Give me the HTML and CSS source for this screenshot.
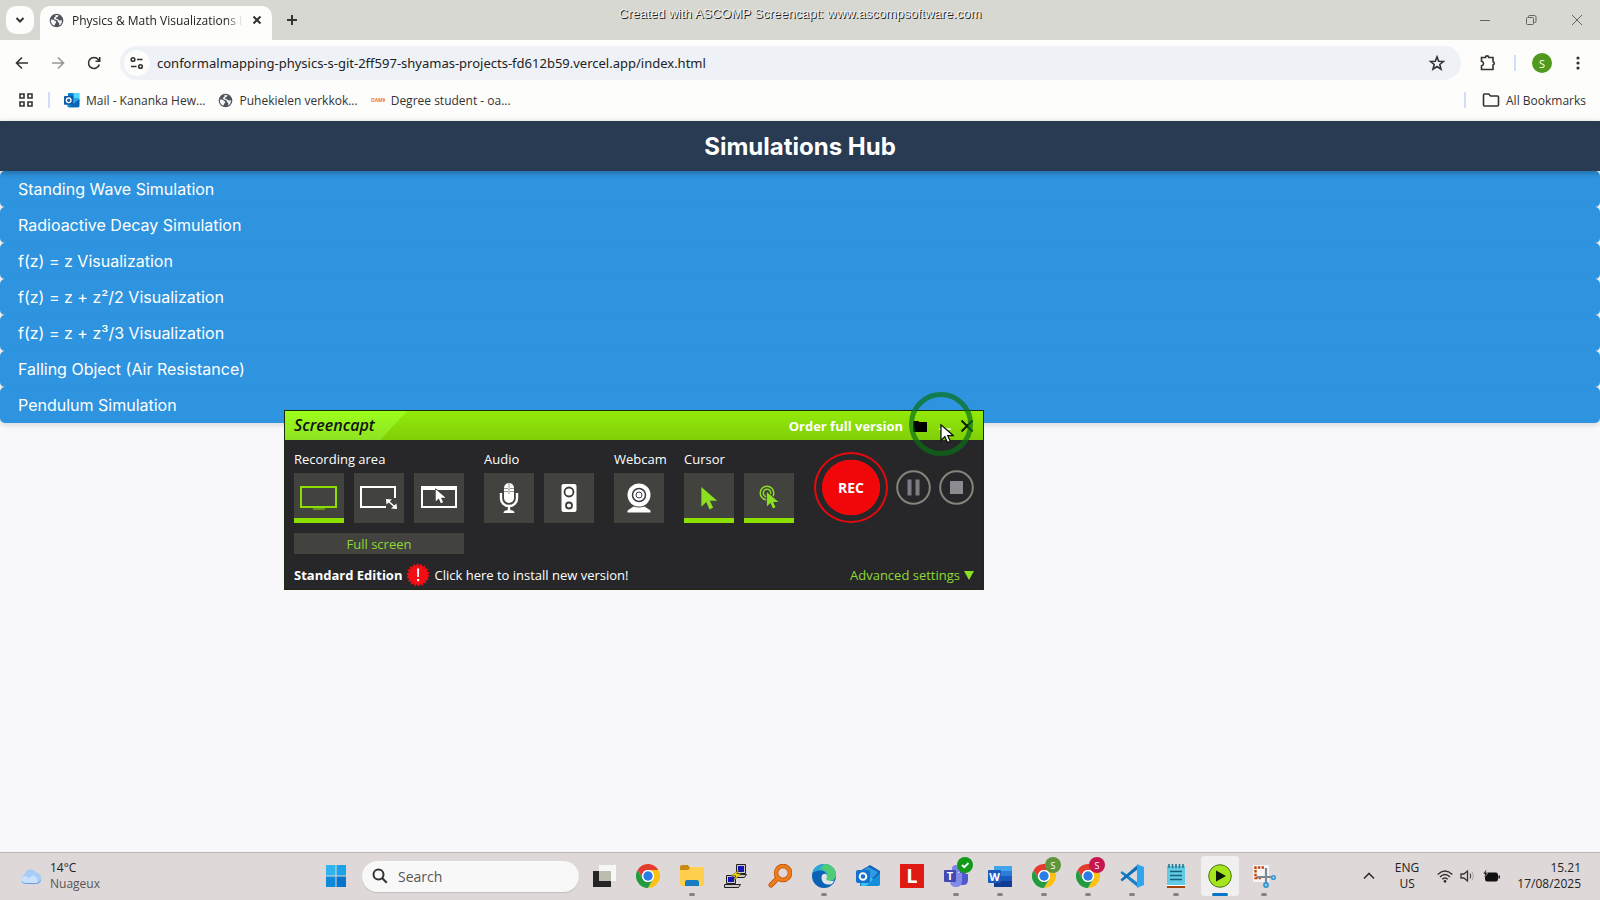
FILE: index.html
```html
<!DOCTYPE html>
<html lang="en">
<head>
<meta charset="utf-8">
<title>Physics &amp; Math Visualizations Hub</title>
<link rel="stylesheet" href="styles.css">
</head>
<body>
<svg class="defs" aria-hidden="true">
  <defs>
    <symbol id="globe" viewBox="0 0 16 16"><circle cx="8" cy="8" r="7.300" fill="#50555b"/><path d="M2 7.200C4 6.500 5.200 7.500 6.500 8.200 8 9 8 10.400 6.800 11.200 6 12 6.300 13 5.500 13.600 3 12.500 1.600 10 2 7.200ZM7 2l3.200.3L9.400 4 7.600 4.800 7.800 6.400 9.600 6.600 11 8 13.800 7.600C14 10 12.800 12.300 10.800 13.300L11 11 9.400 9.200 9 7.800 6.200 7 5 5.200 6.800 4Z" fill="#f4f5f6"/></symbol>
    <symbol id="outlook" viewBox="0 0 24 24"><path d="M6 2h17v14H6z" fill="#28a8ea"/><path d="M6 2h8.500v7H6z" fill="#0078d4"/><path d="M14.500 2H23v7h-8.500z" fill="#50d9ff"/><path d="M5 11 14 17 23 11v10a2 2 0 0 1-2 2H7a2 2 0 0 1-2-2z" fill="#1490df"/><path d="m23 11-16 12h14a2 2 0 0 0 2-2z" fill="#0a64b8"/><rect x="0" y="6" width="14" height="13" rx="1" fill="#0f5ba7"/><circle cx="7" cy="12.500" r="3.500" fill="none" stroke="#fff" stroke-width="2"/></symbol>
    <symbol id="chrome" viewBox="0 0 24 24"><circle cx="12" cy="12" r="12" fill="#fff"/><path d="M1.600 6A12 12 0 0 1 22.400 6H12a6 6 0 0 0-5.200 9Z" fill="#e33b2e"/><path d="M22.400 6A12 12 0 0 1 12 24l5.200-9A6 6 0 0 0 12 6Z" fill="#fbc116"/><path d="M12 24A12 12 0 0 1 1.600 6l5.200 9A6 6 0 0 0 17.200 15Z" fill="#249a41"/><circle cx="12" cy="12" r="6" fill="#fff"/><circle cx="12" cy="12" r="4.700" fill="#2a7de9"/></symbol>
    <symbol id="pointer" viewBox="0 0 16 22"><path d="M1 1v18l4.500-4.300L8.500 21.500l3.300-1.500-3-6.500H15.500Z"/></symbol>
  </defs>
</svg>

<div class="desktop">
  <header class="browser">
    <div class="tabstrip">
      <button class="tab-search" aria-label="Search tabs"><svg width="12" height="12" viewBox="0 0 12 12" class="line thick"><path d="m2.500 4 3.500 3.500L9.500 4"/></svg></button>
      <div class="tab">
        <svg width="15" height="15"><use href="#globe"/></svg>
        <span class="tab-title">Physics &amp; Math Visualizations Hub</span>
        <button aria-label="Close tab"><svg width="12" height="12" viewBox="0 0 12 12" class="line thick"><path d="m2.500 2.500 7 7m0-7-7 7"/></svg></button>
      </div>
      <button class="new-tab" aria-label="New tab"><svg width="12" height="12" viewBox="0 0 12 12" class="line thick"><path d="M6 1v10M1 6h10"/></svg></button>
      <div class="window-buttons">
        <button aria-label="Minimize"><svg width="12" height="12" viewBox="0 0 12 12" class="line"><path d="M1 6.500h10"/></svg></button>
        <button aria-label="Restore"><svg width="12" height="12" viewBox="0 0 12 12" class="line"><rect x="1.500" y="3.500" width="7" height="7" rx="1"/><path d="M3.500 3V2.500q0-1 1-1h5q1.500 0 1.500 1.500v4.500q0 1-1 1h-.8"/></svg></button>
        <button aria-label="Close"><svg width="12" height="12" viewBox="0 0 12 12" class="line"><path d="m1 1 10 10m0-10L1 11"/></svg></button>
      </div>
    </div>
    <div class="toolbar">
      <button aria-label="Back"><svg width="16" height="16" viewBox="0 0 16 16" class="line mid"><path d="M14 8H3m5-5.500L2.500 8 8 13.500"/></svg></button>
      <button aria-label="Forward" class="faded"><svg width="16" height="16" viewBox="0 0 16 16" class="line mid"><path d="M2 8h11M8 2.500 13.500 8 8 13.500"/></svg></button>
      <button aria-label="Reload"><svg width="16" height="16" viewBox="0 0 16 16" class="line mid"><path d="M13.300 9.500A5.500 5.500 0 1 1 12.300 4.500L13.500 6M13.700 2v4.200H9.500"/></svg></button>
      <div class="address">
        <button class="site-info" aria-label="Site information"><svg width="16" height="16" viewBox="0 0 16 16" class="line mid"><circle cx="4" cy="4.500" r="1.800"/><path d="M8 4.500h5.500M2 11.500h5.500"/><circle cx="11.500" cy="11.500" r="1.800"/></svg></button>
        <input type="text" aria-label="Address" value="conformalmapping-physics-s-git-2ff597-shyamas-projects-fd612b59.vercel.app/index.html">
        <button aria-label="Bookmark this page"><svg width="16" height="16" viewBox="0 0 16 16" class="line mid"><path d="m8 1.800 1.700 4.400 4.700.3-3.600 3 1.200 4.600L8 11.500l-4 2.600 1.200-4.600-3.600-3 4.700-.3Z"/></svg></button>
      </div>
      <button aria-label="Extensions"><svg width="18" height="18" viewBox="0 0 18 18" class="line mid"><path d="M2.500 3.500H6.500a1.600 1.600 0 0 1 3.200 0H14v4.200a1.700 1.700 0 0 1 0 3.300v4.500H2.500v-3.700q2-.5 2-2.300t-2-2.300Z"/></svg></button>
      <i class="divider"></i>
      <button class="avatar" aria-label="Profile">S</button>
      <button aria-label="Menu"><svg width="16" height="16" viewBox="0 0 16 16" fill="#333"><circle cx="8" cy="3" r="1.600"/><circle cx="8" cy="8" r="1.600"/><circle cx="8" cy="13" r="1.600"/></svg></button>
    </div>
    <nav class="bookmarks">
      <button aria-label="Apps"><svg width="16" height="16" viewBox="0 0 16 16" class="line mid"><path d="M2 2h4v4H2zM10 2h4v4h-4zM2 10h4v4H2zM10 10h4v4h-4z"/></svg></button>
      <i class="divider"></i>
      <a href="#mail"><svg width="16" height="16"><use href="#outlook"/></svg>Mail - Kananka Hew...</a>
      <a href="#puhekielen"><svg width="15" height="15"><use href="#globe"/></svg>Puhekielen verkkok...</a>
      <a href="#degree"><b class="oamk">OAMK</b>Degree student - oa...</a>
      <i class="divider push"></i>
      <a href="#all"><svg width="18" height="16" viewBox="0 0 18 16" class="line mid"><path d="M1.500 13V3q0-1 1-1h4.300l1.700 2h7q1 0 1 1v8q0 1-1 1h-13q-1 0-1-1Z"/></svg>All Bookmarks</a>
    </nav>
    <div class="watermark">Created with ASCOMP Screencapt: www.ascompsoftware.com</div>
  </header>

  <main class="page">
    <h1>Simulations Hub</h1>
    <nav class="links">
      <a href="#wave">Standing Wave Simulation</a>
      <a href="#decay">Radioactive Decay Simulation</a>
      <a href="#z">f(z) = z Visualization</a>
      <a href="#z2">f(z) = z + z²/2 Visualization</a>
      <a href="#z3">f(z) = z + z³/3 Visualization</a>
      <a href="#fall">Falling Object (Air Resistance)</a>
      <a href="#pendulum">Pendulum Simulation</a>
    </nav>
  </main>

  <section class="recorder" aria-label="Screencapt">
    <div class="rec-title">
      <span class="brand">Screencapt</span>
      <a href="#order">Order full version</a>
      <button aria-label="Open folder"><svg width="14" height="12" viewBox="0 0 14 12"><path d="M0 1h5l1.500 1H14v10H0z"/></svg></button>
      <button aria-label="Minimize"><svg width="12" height="12" viewBox="0 0 12 12"><path d="M0 8h12v2H0z" fill="#d9f7a0"/></svg></button>
      <button aria-label="Close"><svg width="14" height="14" viewBox="0 0 14 14"><path d="m1.500 1.500 11 11m0-11-11 11" stroke="#0b1a00" stroke-width="2"/></svg></button>
    </div>
    <div class="rec-body">
      <div class="group">
        <h2>Recording area</h2>
        <div class="tiles">
          <button class="tile on" aria-label="Full screen"><svg width="38" height="26" viewBox="0 0 38 26" fill="none" stroke="#8be000" stroke-width="2"><rect x="1" y="2" width="35" height="20"/><path d="M13 24h12" stroke-width="1"/></svg></button>
          <button class="tile" aria-label="Region"><svg width="38" height="26" viewBox="0 0 38 26" fill="none" stroke="#fff" stroke-width="2"><path d="M26 22H1V2h34v11"/><path d="m27 15 9 8" stroke-width="1.500"/><path d="m26 14 6 .5-5.500 5ZM37 24l-6-.5 5.500-5Z" fill="#fff" stroke="none"/></svg></button>
          <button class="tile" aria-label="Window"><svg width="38" height="26" viewBox="0 0 38 26"><path d="M1 1h36v22H1zM3 5v16h32V5z" fill="#fff" fill-rule="evenodd"/><svg x="15" y="3" width="11" height="16" viewBox="0 0 16 22" fill="#fff" stroke="#37373a" stroke-width="2" paint-order="stroke"><use href="#pointer"/></svg></svg></button>
        </div>
        <button class="mode">Full screen</button>
      </div>
      <div class="group">
        <h2>Audio</h2>
        <div class="tiles">
          <button class="tile" aria-label="Microphone"><svg width="20" height="32" viewBox="0 0 20 32"><rect x="5" y="1" width="10" height="20" rx="5" fill="#fff"/><path d="M5 6.500h4m2 0h4M5 9.500h4m2 0h4M10 1v11" stroke="#99998f"/><path d="M2 11v5.500a8 7.500 0 0 0 16 0V11M10 24v5" fill="none" stroke="#fff" stroke-width="2.400"/><path d="M4.500 31q0-3 5.500-3t5.500 3Z" fill="#fff"/></svg></button>
          <button class="tile" aria-label="Speaker"><svg width="16" height="30" viewBox="0 0 16 30"><rect x=".5" y="1" width="15" height="28" rx="2" fill="#fff"/><g fill="none" stroke="#3b3b37" stroke-width="1.800"><circle cx="8" cy="9" r="4.500"/><circle cx="8" cy="22.500" r="3"/></g></svg></button>
        </div>
      </div>
      <div class="group narrow">
        <h2>Webcam</h2>
        <div class="tiles">
          <button class="tile" aria-label="Webcam"><svg width="26" height="32" viewBox="0 0 26 32"><circle cx="13" cy="13" r="11.500" fill="#fff"/><circle cx="13" cy="13" r="6.500" fill="none" stroke="#3b3b45" stroke-width="1.500"/><circle cx="13" cy="13" r="3" fill="none" stroke="#3b3b45"/><path d="M1.500 30.500v-2l6-4q5.500 2 11 0l6 4v2Z" fill="#fff"/></svg></button>
        </div>
      </div>
      <div class="group">
        <h2>Cursor</h2>
        <div class="tiles">
          <button class="tile on" aria-label="Show cursor"><svg width="18" height="24" fill="#8be022"><use href="#pointer"/></svg></button>
          <button class="tile on" aria-label="Show clicks"><svg width="20" height="26" viewBox="0 0 20 26"><g fill="none" stroke="#8be022" stroke-width="1.500"><circle cx="8" cy="8" r="6.800"/><circle cx="8" cy="8" r="3.700"/></g><svg x="7" y="6" width="13" height="18" viewBox="0 0 16 22" fill="#8be022" stroke="#39393f" stroke-width="2" paint-order="stroke"><use href="#pointer"/></svg></svg></button>
        </div>
      </div>
      <div class="controls">
        <button class="rec">REC</button>
        <button aria-label="Pause"><svg width="35" height="35" viewBox="0 0 35 35"><circle cx="17.500" cy="17.500" r="16.300" fill="none" stroke="#85857b" stroke-width="2"/><path d="M11.500 9.500h4v16h-4zM19.500 9.500h4v16h-4z" fill="#7c7c86"/></svg></button>
        <button aria-label="Stop"><svg width="35" height="35" viewBox="0 0 35 35"><circle cx="17.500" cy="17.500" r="16.300" fill="none" stroke="#85857b" stroke-width="2"/><path d="M11 11h13v13H11z" fill="#8b8b92"/></svg></button>
      </div>
    </div>
    <div class="rec-foot">
      <b>Standard Edition</b>
      <svg width="24" height="24" viewBox="0 0 24 24"><circle cx="12" cy="12" r="10" fill="#f30d14"/><circle cx="12" cy="12" r="10" fill="none" stroke="#f30d14" stroke-width="2.500" stroke-dasharray="1.800 1.700"/><path d="M11 5.500h2.200l-.3 8.500h-1.600zM11 16h2.200v2.300H11z" fill="#fff"/></svg>
      <a href="#install">Click here to install new version!</a>
      <button class="advanced">Advanced settings <svg width="10" height="9" viewBox="0 0 10 9"><path d="M0 0h10L5 9Z" fill="#8be022"/></svg></button>
    </div>
    <div class="click-ring"><svg width="14" height="19" fill="#fff" stroke="#111" stroke-width="1.500"><use href="#pointer"/></svg></div>
  </section>

  <footer class="taskbar">
    <button class="weather">
      <svg width="22" height="18" viewBox="0 0 22 18"><path d="M5 17a5 5 0 0 1-.5-9.700A6.200 6.200 0 0 1 16 5.500a5.800 5.800 0 0 1 .5 11.500Z" fill="#a9ccf6"/><path d="M5 17a4 4 0 0 1 0-8q3 0 4 2.500Q12 7 16 10q3 3 .5 7Z" fill="#c8e1fb"/><path d="M1.500 14q1.500 2.500 4 2.500h11q3 0 4-3" fill="none" stroke="#6e9be6"/></svg>
      <span>14°C<small>Nuageux</small></span>
    </button>
    <div class="apps">
      <button class="app" aria-label="Start"><svg width="24" height="24" viewBox="0 0 24 24"><path d="M2 1h9.500v10.500H2z" fill="#30b4ee"/><path d="M12.500 1H22v10.500h-9.500z" fill="#1ba3e8"/><path d="M2 12.500h9.500V23H2z" fill="#1089db"/><path d="M12.500 12.500H22V23h-9.500z" fill="#0875cd"/></svg></button>
      <label class="search"><svg width="16" height="16" viewBox="0 0 16 16" class="line thick"><circle cx="6.500" cy="6.500" r="5"/><path d="m10.300 10.300 4.500 4.500"/></svg><input type="text" placeholder="Search" aria-label="Search"></label>
      <button class="app" aria-label="Task view"><svg width="24" height="24" viewBox="0 0 24 24"><path d="M7 1h17v16H7z" fill="#f7f7f7"/><path d="M1 7h18v16H1z" fill="#252525"/><path d="M7 7h12v10H7z" fill="#bcbcaf"/></svg></button>
      <button class="app" aria-label="Chrome"><svg width="24" height="24"><use href="#chrome"/></svg></button>
      <button class="app run" aria-label="File Explorer"><svg width="24" height="24" viewBox="0 0 24 24"><path d="M0 3q0-2 2-2h6l2 3v3H0z" fill="#c98a12"/><path d="M0 6h8l3-3h11q2 0 2 2v15q0 2-2 2H2q-2 0-2-2z" fill="#ffcf4d"/><path d="M5 22v-4q0-2 2-2h10q2 0 2 2v4Z" fill="#167dc0"/></svg></button>
      <button class="app" aria-label="PuTTY"><svg width="24" height="24" viewBox="0 0 24 24"><g stroke="#222" fill="#c8c8c8"><path d="M12.500.5h9v9h-9zM9.500 10.500h13l-2 3H8.500zM2.500 11.500h9v8h-9zM.5 20.500h16l-2 3H.5z"/></g><path d="M14 2h6v6h-6zM4 13h6v5H4z" fill="#1515b8"/><path d="m15 6-8 6 5-.5-2 5 7-7-4.500.5Z" fill="#ffe600" stroke="#555500" stroke-width=".5"/></svg></button>
      <button class="app" aria-label="Finder"><svg width="24" height="24" viewBox="0 0 24 24" fill="none"><circle cx="15" cy="9" r="7" stroke="#b84e08" stroke-width="4.500"/><path d="M9.500 14.500 3 21" stroke="#b84e08" stroke-width="5" stroke-linecap="round"/><circle cx="15" cy="9" r="7" stroke="#f07c19" stroke-width="3.200"/><path d="M9.500 14.500 3 21" stroke="#f07c19" stroke-width="3.600" stroke-linecap="round"/></svg></button>
      <button class="app run" aria-label="Edge"><svg width="24" height="24" viewBox="0 0 24 24"><circle cx="12" cy="12" r="12" fill="#0c62b4"/><path d="M.2 10C1.500 3.500 6.500 0 12 0c7 0 12 5 12 10.500 0 4-3 6.500-6.500 6.500-3 0-4.500-1.500-3.500-3C16 10 12.500 6.500 8 6.500 4 6.500 1.500 8 .2 10Z" fill="#27a8d8"/><path d="M12 0c7 0 12 5 12 10.500 0 4-3 6.500-6.500 6.500-3 0-4.500-1.500-3.500-3 2-3 1-8-6-9Z" fill="#4fca77"/><path d="M10 11q4-3 5 1 .5 1.500-1 3 2 3 8.500 1.500L20 20q-8 2-10-3.500-1-3 0-5.500Z" fill="#dfe5e6"/></svg></button>
      <button class="app" aria-label="Outlook"><svg width="24" height="24" viewBox="0 0 24 24"><path d="m4 7 10-6 10 6v12q0 3-3 3H4z" fill="#1263bb"/><path d="m12 3 10 5-6 7-9-8z" fill="#2d9be4"/><path d="m4 15 9-3 11 10H5z" fill="#35c4f2"/><path d="m24 9-14 13h11q3 0 3-3z" fill="#178edb"/><rect y="6" width="14" height="13" rx="2" fill="#1272cd"/><circle cx="7" cy="12.500" r="3.300" fill="none" stroke="#fff" stroke-width="2"/></svg></button>
      <button class="app" aria-label="L"><span class="ell">L</span></button>
      <button class="app run" aria-label="Teams"><svg width="24" height="24" viewBox="0 0 24 24"><circle cx="19" cy="7" r="3.500" fill="#5059c9"/><circle cx="12" cy="5" r="4" fill="#7b83eb"/><path d="M15 10h9v6q0 5-5 5h-4z" fill="#5059c9"/><path d="M7 9h11v8q0 6-6 6t-6-6z" fill="#8289e8"/><rect y="6" width="12" height="12" rx="1" fill="#4349ae"/><text x="6" y="16" text-anchor="middle" class="letter">T</text></svg><span class="badge green"><svg width="10" height="10" viewBox="0 0 10 10" fill="none" stroke="#fff" stroke-width="1.800"><path d="m2 5 2.200 2.200L8.500 3"/></svg></span></button>
      <button class="app run" aria-label="Word"><svg width="24" height="24" viewBox="0 0 24 24"><path d="M6 2h18v6H6z" fill="#41a5ee"/><path d="M6 7h18v6H6z" fill="#2b7cd3"/><path d="M6 12h18v6H6z" fill="#185abd"/><path d="M6 17h18v6H6z" fill="#103f91"/><rect y="6" width="13" height="13" rx="1" fill="#185abd"/><text x="6.500" y="16.500" text-anchor="middle" class="letter">W</text></svg></button>
      <button class="app run" aria-label="Chrome profile 1"><svg width="24" height="24"><use href="#chrome"/></svg><span class="badge olive">S</span></button>
      <button class="app run" aria-label="Chrome profile 2"><svg width="24" height="24"><use href="#chrome"/></svg><span class="badge pink">S</span></button>
      <button class="app run" aria-label="Visual Studio Code"><svg width="24" height="24" viewBox="0 0 24 24"><path d="M2 7 18 19V23.500L.5 9Z" fill="#1482cc"/><path d="M2 17.500 18 5V.5L.5 15.500Z" fill="#0e6fb5"/><path d="m17 0 7 3v18l-7 3z" fill="#30a6ee"/></svg></button>
      <button class="app run" aria-label="Notepad"><svg width="20" height="26" viewBox="0 0 20 26"><rect x="1" y="3" width="18" height="19" fill="#62cbe4"/><path d="M4 8.500h12M4 12.500h12M4 16.500h12" stroke="#155f7c" stroke-width="1.600"/><path d="M3 1v4M6.500 1v4M10 1v4M13.500 1v4M17 1v4" stroke="#247590" stroke-width="1.600"/><path d="M1 22h18v1H1z" fill="#fff"/><path d="M1 23h18v2H1z" fill="#a5440c"/></svg></button>
      <button class="app current" aria-label="Screencapt"><svg width="24" height="24" viewBox="0 0 24 24"><circle cx="12" cy="12" r="11.300" fill="#a4e51c" stroke="#50731a"/><path d="m8 6.500 10 5.500-10 5.500Z" fill="#0c1704"/></svg></button>
      <button class="app run" aria-label="Snipping Tool"><svg width="24" height="24" viewBox="0 0 24 24" fill="none"><path d="M1 1h16v17H1z" fill="#f5f5f5"/><path d="M12 3.500H3.500V14H9" stroke="#c74511" stroke-width="2.500" stroke-dasharray="2.500 1.200"/><path d="M14 4v16M5 13h15" stroke="#7f8794" stroke-width="2.200"/><circle cx="14" cy="21" r="2" stroke="#2a9bd7" stroke-width="1.800"/><circle cx="21.500" cy="13.500" r="1.800" stroke="#2a9bd7" stroke-width="1.600"/></svg></button>
    </div>
    <div class="tray">
      <button aria-label="Show hidden icons"><svg width="12" height="12" viewBox="0 0 12 12" class="line mid"><path d="M1 8.500 6 3.500l5 5"/></svg></button>
      <button class="lang">ENG<br>US</button>
      <button class="status" aria-label="Network, sound, battery">
        <svg width="16" height="14" viewBox="0 0 16 14" class="line"><path d="M.7 5.500q7.300-7 14.600 0M3 8q5-4.800 10 0M5.200 10.300q2.800-2.600 5.600 0" stroke-width="1.400"/><circle cx="8" cy="12.300" r="1" fill="#222"/></svg>
        <svg width="16" height="14" viewBox="0 0 16 14" class="line"><path d="M1 5h2.800L7.500 2v10L3.800 9H1Z" stroke-width="1.300"/><path d="M10 4.500q1.500 2.500 0 5"/><path d="M12 2.500q3 4.500 0 9" stroke="#aaa"/></svg>
        <svg width="17" height="14" viewBox="0 0 17 14"><rect x="2.500" y="4" width="12" height="8" rx="1.500" fill="#111" stroke="#111"/><path d="M15.500 6.500h1.300v3h-1.300z"/><path d="M3.500 0 0 5h2L1 9l4-5H3Z" fill="#111" stroke="#ddd" stroke-width=".5"/></svg>
      </button>
      <time class="clock">15.21<br>17/08/2025</time>
    </div>
  </footer>
</div>
</body>
</html>
```
FILE: styles.css
```css
* { box-sizing: border-box; }
body { margin: 0; font-family: "Open Sans", "Noto Sans", sans-serif; font-size: 12px; color: #222; }
button { display: flex; align-items: center; justify-content: center; padding: 0; border: 0; background: none; color: inherit; font: inherit; }
a { color: inherit; text-decoration: none; }
input { min-width: 0; border: 0; outline: 0; padding: 0; background: none; font: inherit; color: inherit; }
svg { display: block; flex: none; }
.defs { position: absolute; width: 0; height: 0; }
.line { fill: none; stroke: #333; stroke-width: 1; }
.line.mid { stroke-width: 1.600; }
.line.thick { stroke-width: 2; }

.desktop { position: relative; display: flex; flex-direction: column; min-height: 100vh; }

/* Browser frame */
.browser { position: relative; background: #fdfdfb; }
.tabstrip { display: flex; align-items: center; height: 40px; padding-left: 6px; background: #d7d8d1; }
.tab-search { width: 28px; height: 28px; border-radius: 10px; background: #fdfdfb; }
.tab { display: flex; align-items: center; align-self: flex-end; gap: 8px; width: 232px; height: 34px; margin-left: 6px; padding: 0 9px 6px; border-radius: 10px 10px 0 0; background: #fdfdfb; }
.tab-title { flex: 1; overflow: hidden; white-space: nowrap; -webkit-mask-image: linear-gradient(90deg, #000 90%, transparent); mask-image: linear-gradient(90deg, #000 90%, transparent); }
.new-tab { width: 28px; height: 28px; margin-left: 6px; }
.window-buttons { display: flex; margin-left: auto; opacity: 0.7; }
.window-buttons button { width: 46px; height: 40px; }
.watermark { position: absolute; top: 5px; left: 0; right: 0; text-align: center; font: 13px/18px "Liberation Sans", sans-serif; color: #eee; text-shadow: 1px 1px 0 #222; pointer-events: none; }

.toolbar { display: flex; align-items: center; height: 46px; padding: 0 4px; }
.toolbar > button { width: 36px; height: 34px; }
.toolbar .faded { opacity: 0.5; }
.address { display: flex; flex: 1; align-items: center; height: 34px; margin: 0 9px 0 8px; padding: 0 16px 0 4px; border-radius: 17px; background: #eef1f5; font-family: "Noto Sans", sans-serif; font-size: 13px; }
.address input { flex: 1; margin-left: 7px; }
.site-info { width: 26px; height: 26px; border-radius: 13px; background: #fdfdfb; }
.divider { width: 2px; height: 16px; background: #cfdff5; }
.toolbar .divider { margin: 0 16px 0 8px; }
.toolbar .avatar { width: 20px; height: 20px; margin-right: 8px; border-radius: 10px; background: #4f9a1c; color: #fff; font-size: 11px; }

.bookmarks { display: flex; align-items: center; height: 35px; padding: 0 14px 7px 18px; }
.bookmarks a { display: flex; align-items: center; gap: 6px; margin-right: 13px; color: #333; }
.bookmarks a:last-child { margin: 0 0 0 16px; }
.bookmarks .divider { margin: 0 14px; }
.bookmarks .push { margin: 0 0 0 auto; }
.oamk { width: 14px; overflow: hidden; color: #ec7a32; font-size: 5px; }

/* Page */
.page { flex: 1; background: #f8f8fb; font-family: Inter, sans-serif; }
.page h1 { position: relative; margin: 0; padding: 11px 10px 9px; background: #283b52; color: #fff; font-size: 24px; line-height: 30px; font-weight: 700; text-align: center; box-shadow: 0 2px 6px rgba(0, 0, 0, 0.3); }
.links { display: flex; flex-direction: column; }
.links a { padding: 8px 18px; border-radius: 5px; background: #2e94df; color: #fff; font-size: 16px; line-height: 20px; font-weight: 400; box-shadow: 0 3px 4px rgba(0, 0, 0, 0.1); }

/* Recorder window */
.recorder { position: absolute; left: 284px; top: 410px; width: 700px; border: 1px solid #1c2b10; background: #27272a; color: #fff; font-size: 13px; }
.rec-title { display: flex; align-items: center; height: 29px; padding-right: 9px; background: linear-gradient(#93ea0a, #80cf08); font-weight: 700; }
.brand { align-self: stretch; width: 122px; margin-right: auto; padding-left: 9px; background: linear-gradient(180deg, #9dff1c, #8de321); clip-path: polygon(0 0, 100% 0, 78% 100%, 0 100%); color: #111; font-size: 16px; line-height: 28px; font-weight: 600; font-style: italic; }
.rec-title button { margin-left: 10px; }
.rec-title button + button { margin-left: 12px; }
.rec-title button + button + button { margin-left: 9px; }
.rec-body { display: flex; gap: 20px; padding: 10px 9px 0; }
.group h2 { margin: 0 0 5px; font-size: 13px; line-height: 18px; font-weight: 400; white-space: nowrap; }
.narrow { width: 50px; }
.tiles { display: flex; gap: 10px; }
.tile { width: 50px; height: 50px; background: #42423f; }
.tile.on { border-bottom: 5px solid #8be000; padding-top: 5px; }
.mode { width: 100%; height: 21px; margin-top: 10px; background: #42423f; color: #8dda32; }
.controls { display: flex; align-items: center; align-self: flex-start; gap: 8px; margin: 2px 0 0 auto; }
.controls .rec { width: 74px; height: 71px; border: 2px solid #e8090c; border-radius: 50%; background: radial-gradient(closest-side, #f10609 82%, #27272a 84%); font-size: 14px; font-weight: 700; }
.rec-foot { display: flex; align-items: center; gap: 4px; height: 28px; margin-top: 7px; padding: 0 9px; }
.advanced { gap: 4px; margin-left: auto; color: #8dda32; }
.click-ring { position: absolute; left: 624px; top: -19px; width: 64px; height: 64px; padding: 27px 0 0 26px; border: 5px solid rgba(8, 112, 22, 0.7); border-radius: 50%; pointer-events: none; }
.click-ring svg { overflow: visible; }

/* Taskbar */
.taskbar { display: grid; grid-template-columns: 1fr auto 1fr; align-items: center; height: 48px; padding-bottom: 1px; border-top: 1px solid #b9b8bb; background: #dfd8d8; }
.weather { justify-content: flex-start; gap: 8px; padding-left: 20px; text-align: left; line-height: 16px; }
.weather small { display: block; font-size: 12px; color: #555; }
.apps { display: flex; align-items: center; }
.app { position: relative; width: 44px; height: 40px; }
.search { display: flex; align-items: center; gap: 10px; width: 217px; height: 31px; margin: 0 3px 0 4px; padding: 0 10px; border-radius: 16px; background: #f8f8f8; box-shadow: 0 1px 1px #c3bebc; font-size: 14px; }
.search input { width: 150px; }
.search input::placeholder { color: #555; opacity: 1; }
.run::after, .current::after { content: ""; position: absolute; bottom: 0; left: 19px; width: 6px; height: 3px; border-radius: 2px; background: #85827f; }
.current::before { content: ""; position: absolute; inset: 0 3px; z-index: -1; border-radius: 4px; background: #f1efef; }
.current { isolation: isolate; }
.current::after { left: 14px; width: 16px; background: #0875c9; }
.ell { width: 24px; height: 24px; background: #df1a12; color: #fff; font-size: 20px; line-height: 24px; font-weight: 700; }
.letter { fill: #fff; font: 700 11px "Open Sans", sans-serif; }
.badge { position: absolute; top: 1px; right: 5px; display: flex; align-items: center; justify-content: center; width: 16px; height: 16px; border-radius: 8px; color: #fff; font-size: 9px; }
.green { background: #119a18; }
.olive { background: #5f963a; }
.pink { background: #c5164f; }
.tray { display: flex; align-items: center; justify-content: flex-end; padding-right: 19px; line-height: 16px; }
.lang { margin: 0 18px 0 20px; }
.status { gap: 7px; margin-right: 17px; }
.clock { text-align: right; }
```
